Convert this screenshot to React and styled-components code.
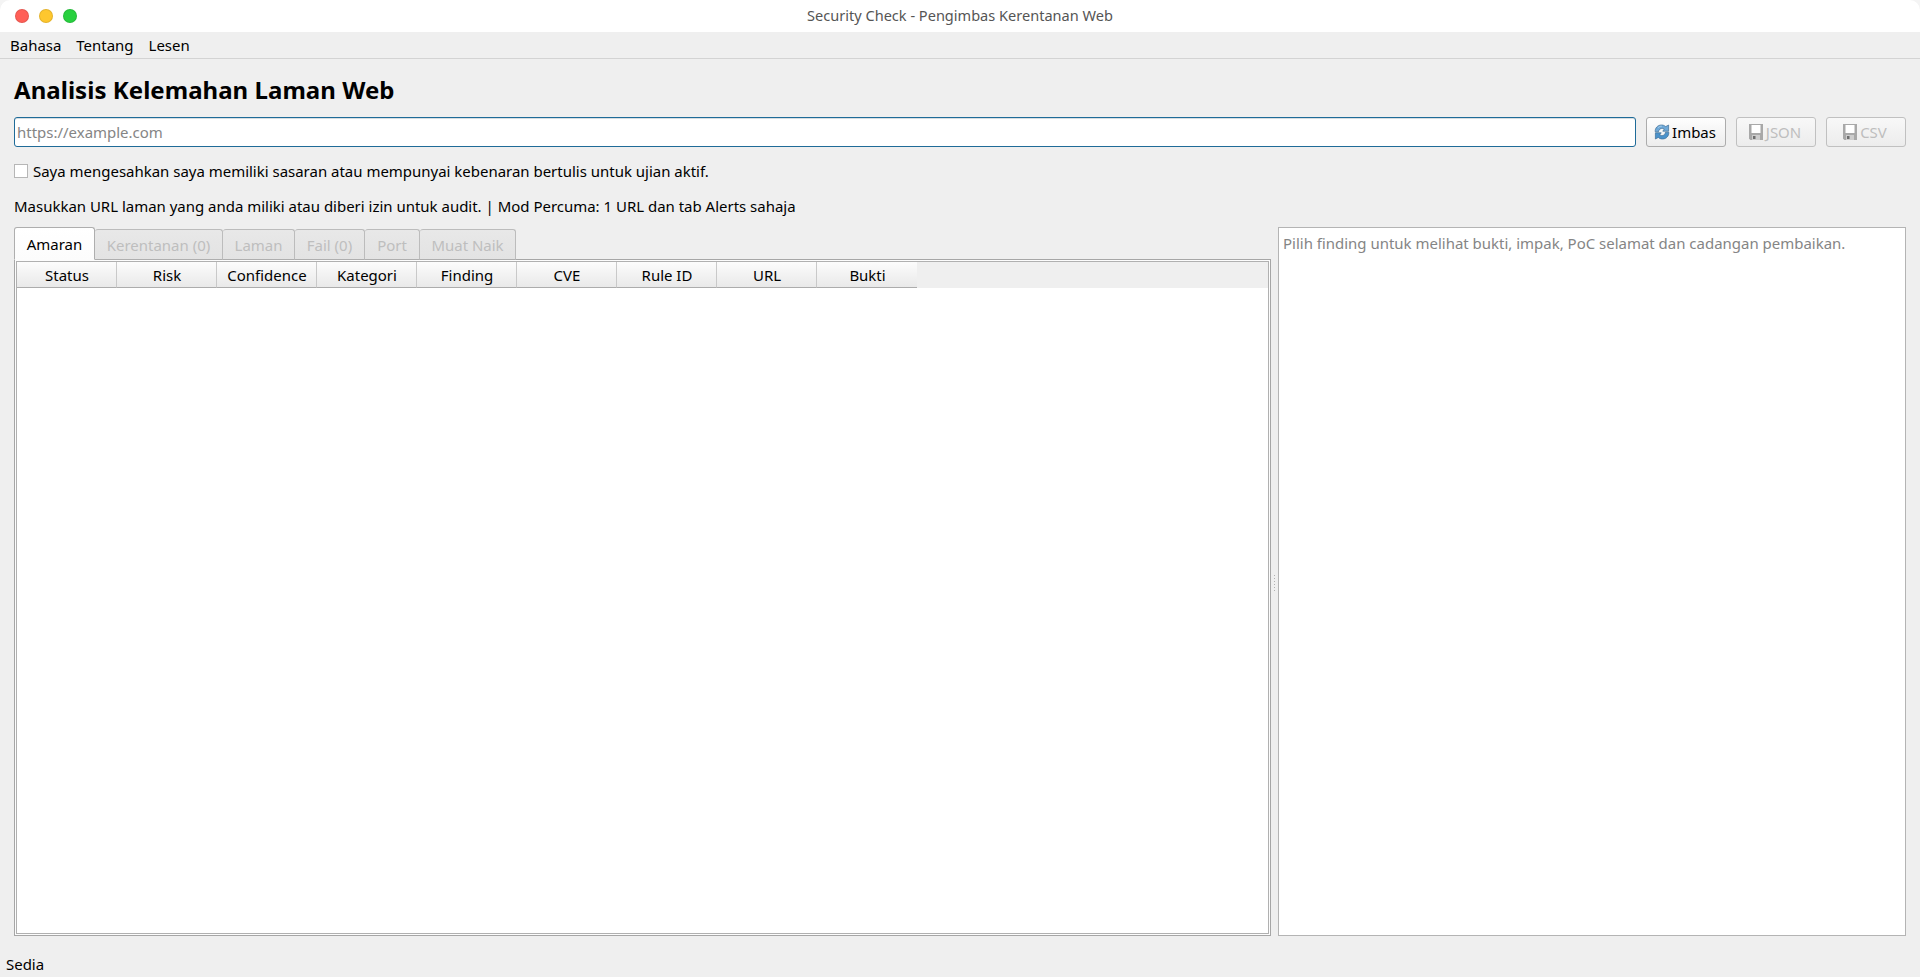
import { useState } from "react";
import styled, { createGlobalStyle } from "styled-components";

const menus = ["Bahasa", "Tentang", "Lesen"];

const tabs = [
  { label: "Amaran", width: 81 },
  { label: "Kerentanan (0)", width: 128 },
  { label: "Laman", width: 72 },
  { label: "Fail (0)", width: 70 },
  { label: "Port", width: 55 },
  { label: "Muat Naik", width: 96 },
];

const columns = [
  "Status",
  "Risk",
  "Confidence",
  "Kategori",
  "Finding",
  "CVE",
  "Rule ID",
  "URL",
  "Bukti",
];

function RefreshIcon() {
  return (
    <svg width="16" height="16" viewBox="0 0 16 16" fill="none">
      <path
        d="M1.200 7.800C.9 4 3.700 1 7.500 1c1.700 0 3.100.6 4.200 1.600L14.600 1v6.200H8.800l1.500-2.200c-.8-.6-1.700-.8-2.600-.6C5.900 4.700 4.700 6 4.500 7.800z"
        fill="#6fa9d8"
        stroke="#3f6f96"
        strokeWidth="0.7"
      />
      <path
        d="M14.800 8.200c.3 3.800-2.500 6.800-6.300 6.800-1.700 0-3.100-.6-4.200-1.600L1.400 15V8.800h5.800L5.700 11c.8.6 1.700.8 2.600.6 1.800-.3 3-1.600 3.200-3.400z"
        fill="#4a92cb"
        stroke="#3f6f96"
        strokeWidth="0.7"
      />
      <path d="M4 3.800C5 2.700 6.300 2.200 7.800 2.200" stroke="#a9d0ee" />
    </svg>
  );
}

function SaveIcon() {
  return (
    <svg width="16" height="16" viewBox="0 0 16 16" fill="none">
      <path d="M1 0h14v16H2.500L1 14.800z" fill="#a8a8a8" />
      <path d="M3.500 1h9v8h-9z" fill="#fff" />
      <path d="M4 11h8v5H4z" fill="#cdcdcd" />
      <path d="M5 12h2.500v3H5z" fill="#6e6e6e" />
    </svg>
  );
}

export default function App() {
  const [url, setUrl] = useState("");
  const [agreed, setAgreed] = useState(false);

  return (
    <>
      <GlobalStyle />
      <Window>
        <TitleBar>
          <Lights>
            <Light $color="#ff5f57" />
            <Light $color="#fec72e" />
            <Light $color="#28d03f" />
          </Lights>
          <span>Security Check - Pengimbas Kerentanan Web</span>
        </TitleBar>

        <MenuBar>
          {menus.map((menu) => (
            <MenuItem key={menu}>{menu}</MenuItem>
          ))}
        </MenuBar>

        <Content>
          <Heading>Analisis Kelemahan Laman Web</Heading>

          <Toolbar>
            <UrlInput
              placeholder="https://example.com"
              value={url}
              onChange={(e) => setUrl(e.target.value)}
            />
            <Button type="button">
              <RefreshIcon />
              Imbas
            </Button>
            <Button type="button" disabled>
              <SaveIcon />
              JSON
            </Button>
            <Button type="button" disabled>
              <SaveIcon />
              CSV
            </Button>
          </Toolbar>

          <Consent>
            <Checkbox
              type="checkbox"
              checked={agreed}
              onChange={() => setAgreed((v) => !v)}
            />
            Saya mengesahkan saya memiliki sasaran atau mempunyai kebenaran
            bertulis untuk ujian aktif.
          </Consent>

          <Hint>
            Masukkan URL laman yang anda miliki atau diberi izin untuk audit. |
            Mod Percuma: 1 URL dan tab Alerts sahaja
          </Hint>

          <Splitter>
            <Results>
              <TabBar>
                {tabs.map((tab, i) => (
                  <Tab key={tab.label} $active={i === 0} $width={tab.width}>
                    {tab.label}
                  </Tab>
                ))}
              </TabBar>
              <Pane>
                <Table>
                  <HeaderRow>
                    {columns.map((column) => (
                      <HeaderCell key={column}>{column}</HeaderCell>
                    ))}
                  </HeaderRow>
                </Table>
              </Pane>
            </Results>

            <Handle>
              {[0, 1, 2, 3, 4, 5].map((dot) => (
                <Dot key={dot} />
              ))}
            </Handle>

            <Detail>
              Pilih finding untuk melihat bukti, impak, PoC selamat dan cadangan
              pembaikan.
            </Detail>
          </Splitter>
        </Content>

        <StatusBar>Sedia</StatusBar>
      </Window>
    </>
  );
}

const GlobalStyle = createGlobalStyle`
  * {
    box-sizing: border-box;
  }

  body {
    margin: 0;
    background: #f4f4f4;
    color: #000;
    font-family: "Noto Sans", sans-serif;
    font-size: 14.98px;
    line-height: 20px;
  }

  button,
  input {
    font: inherit;
  }
`;

const Window = styled.div`
  display: flex;
  flex-direction: column;
  height: 977px;
  background: #efefef;
  border-radius: 10px 10px 0 0;
  overflow: hidden;
`;

const TitleBar = styled.header`
  display: grid;
  grid-template-columns: 1fr auto 1fr;
  align-items: center;
  height: 32px;
  padding: 0 15px;
  background: #fff;
  color: #555;
  font-size: 14.55px;

  > span {
    padding-bottom: 2px;
  }
`;

const Lights = styled.div`
  display: flex;
  gap: 10px;
`;

const Light = styled.span`
  width: 14px;
  height: 14px;
  border-radius: 50%;
  background: ${(p) => p.$color};
  border: 1px solid rgba(0, 0, 0, 0.1);
`;

const MenuBar = styled.nav`
  display: flex;
  gap: 15px;
  height: 27px;
  padding: 3px 10px 0;
  border-bottom: 1px solid #d3d3d3;
`;

const MenuItem = styled.span`
  line-height: 20px;
`;

const Content = styled.main`
  display: flex;
  flex: 1;
  flex-direction: column;
  padding: 14px 14px 0;
`;

const Heading = styled.h1`
  height: 34px;
  margin: 0 0 10px;
  font-size: 24px;
  font-weight: 700;
  line-height: 34px;
  letter-spacing: 0.04px;
`;

const Toolbar = styled.div`
  display: flex;
  gap: 10px;
  height: 30px;
`;

const UrlInput = styled.input`
  flex: 1;
  min-width: 0;
  padding: 0 2px 1px;
  border: 1px solid #1f6b98;
  border-radius: 3px;
  outline: none;
  background: #fff;
  box-shadow: inset 0 1px 0 #d6dde1;

  &::placeholder {
    color: #858585;
  }
`;

const Button = styled.button`
  display: flex;
  align-items: center;
  justify-content: center;
  gap: 2px;
  width: 80px;
  padding: 0 2px 1px 0;
  border: 1px solid #acacac;
  border-radius: 3px;
  background: linear-gradient(#fefefe, #ededed);
  color: #000;

  &:disabled {
    padding-right: 3px;
    border-color: #c0c0c0;
    background: linear-gradient(#f8f8f8, #ececec);
    color: #bebebe;
  }
`;

const Consent = styled.label`
  display: flex;
  align-items: center;
  gap: 5px;
  height: 20px;
  margin-top: 14px;
`;

const Checkbox = styled.input`
  appearance: none;
  width: 14px;
  height: 14px;
  margin: 0;
  border: 1px solid #b6b6b6;
  background: #fff;

  &:checked {
    background: #308cc6;
  }
`;

const Hint = styled.p`
  margin: 15px 0 11px;
`;

const Splitter = styled.div`
  display: flex;
  height: 709px;
`;

const Results = styled.section`
  display: flex;
  flex-direction: column;
  width: 1257px;
`;

const TabBar = styled.div`
  position: relative;
  display: flex;
  align-items: flex-end;
  height: 33px;
  margin-bottom: -1px;
`;

const Tab = styled.div`
  width: ${(p) => p.$width}px;
  height: ${(p) => (p.$active ? 33 : 31)}px;
  padding-top: ${(p) => (p.$active ? 6 : 5)}px;
  border: 1px solid ${(p) => (p.$active ? "#aeaeae" : "#bcbcbc")};
  border-left-width: ${(p) => (p.$active ? 1 : 0)}px;
  border-bottom-color: ${(p) => (p.$active ? "#fcfcfc" : "#aeaeae")};
  border-radius: 3px 3px 0 0;
  background: ${(p) =>
    p.$active ? "linear-gradient(#fff, #fcfcfc)" : "linear-gradient(#e8e8e8, #e3e3e3)"};
  color: ${(p) => (p.$active ? "#000" : "#bebebe")};
  text-align: center;
  white-space: nowrap;
`;

const Pane = styled.div`
  flex: 1;
  padding: 1px;
  border: 1px solid #a6a6a6;
  background: #fcfcfc;
`;

const Table = styled.div`
  height: 100%;
  border: 1px solid #b0b0b0;
  background: #fff;
`;

const HeaderRow = styled.div`
  display: flex;
  height: 26px;
  background: #efefef;
`;

const HeaderCell = styled.div`
  width: 100px;
  padding: 3px 0 0 1px;
  border-right: 1px solid #c9c9c9;
  border-bottom: 1px solid #acacac;
  background: linear-gradient(#fcfcfc, #e9e9e9);
  text-align: center;

  &:last-child {
    border-right: none;
  }
`;

const Handle = styled.div`
  display: flex;
  flex-direction: column;
  align-items: center;
  justify-content: center;
  gap: 2px;
  width: 7px;
  padding-top: 2px;
`;

const Dot = styled.span`
  width: 1px;
  height: 1px;
  background: #b0b0b0;
`;

const Detail = styled.section`
  flex: 1;
  padding: 5px 4px;
  border: 1px solid #b4b4b4;
  background: #fff;
  color: #858585;
`;

const StatusBar = styled.footer`
  height: 23px;
  padding-left: 6px;
`;
